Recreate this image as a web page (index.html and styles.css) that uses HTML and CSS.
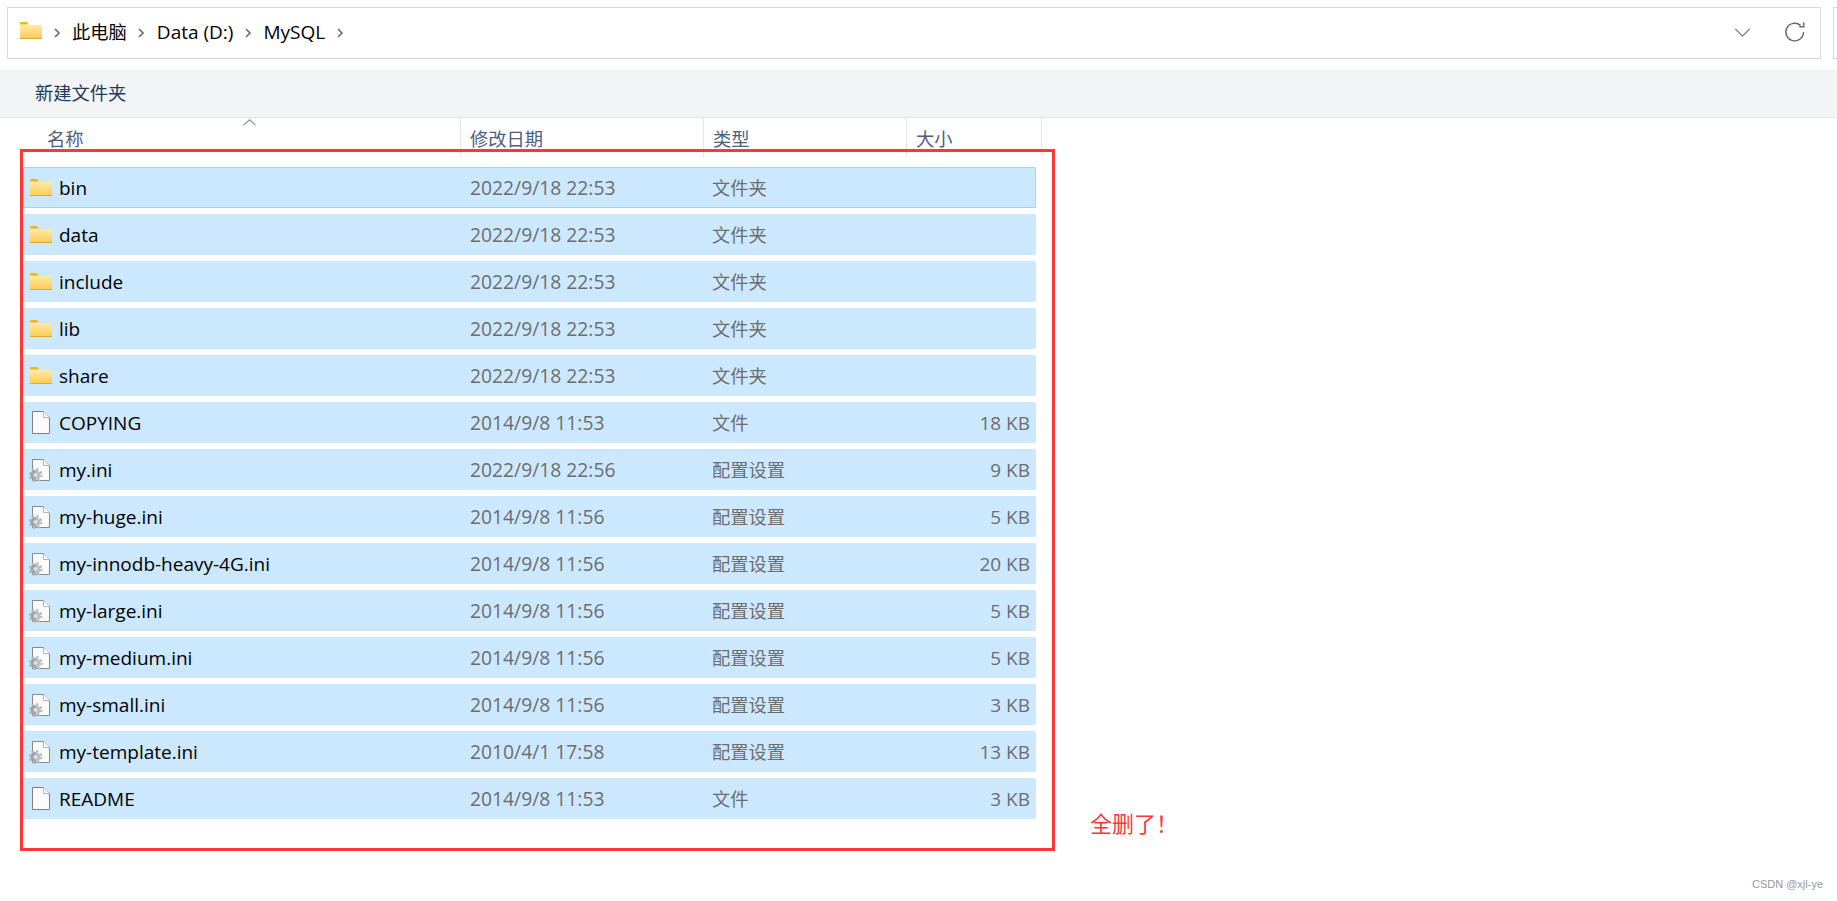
FILE: index.html
```html
<!DOCTYPE html>
<html lang="zh-CN">
  <head>
    <meta charset="UTF-8" />
    <title>MySQL</title>
    <link rel="stylesheet" href="styles.css">
  </head>
  <body>
    <svg class="defs" width="0" height="0">
      <defs>
        <linearGradient id="folderFill" x1="0" y1="0" x2="0" y2="1">
          <stop offset="0" stop-color="#ffeaa4" />
          <stop offset="1" stop-color="#fbca52" />
        </linearGradient>
        <symbol id="folder" viewBox="0 0 22 17">
          <path d="M0 1a1 1 0 0 1 1-1h6l2 2.500H0z" fill="#f6b31d" />
          <path d="M0 3h21.500a.5.5 0 0 1 .5.5V17H0z" fill="url(#folderFill)" />
          <path d="M0 16h22v1H0z" fill="#e3a92f" />
        </symbol>
        <symbol id="doc" viewBox="0 0 18 23">
          <path d="M.5.500h11l6 6v16H.500z" fill="#fbfbfb" stroke="#7f7f7f" />
          <path d="M11.500.500v6h6" fill="#fff" stroke="#b5b5b5" />
        </symbol>
        <symbol id="ini" viewBox="0 0 21 24">
          <path d="M3.500 1.500h11l6 6v15h-17z" fill="#fbfbfb" stroke="#8a8a8a" />
          <path d="M14.500 1.500v6h6" fill="#fff" stroke="#b5b5b5" />
          <circle cx="6.500" cy="17" r="5.900" fill="none" stroke="#b8bbbd" stroke-width="2.200" stroke-dasharray="2.300 2.330" />
          <circle cx="6.500" cy="17" r="5" fill="#bcbfc1" />
          <path d="M6.500 12a5 5 0 0 0 0 10z" fill="#a0a3a6" />
          <circle cx="6.500" cy="17" r="2" fill="#dde0e2" />
        </symbol>
      </defs>
    </svg>

    <div class="address-row">
      <div class="address-bar">
        <svg class="bar-folder"><use href="#folder" /></svg>
        <span class="crumb-sep"><svg viewBox="0 0 7 10"><path d="M1 1l4 4-4 4" /></svg></span>
        <span class="crumb cjk">此电脑</span>
        <span class="crumb-sep"><svg viewBox="0 0 7 10"><path d="M1 1l4 4-4 4" /></svg></span>
        <span class="crumb">Data (D:)</span>
        <span class="crumb-sep"><svg viewBox="0 0 7 10"><path d="M1 1l4 4-4 4" /></svg></span>
        <span class="crumb">MySQL</span>
        <span class="crumb-sep"><svg viewBox="0 0 7 10"><path d="M1 1l4 4-4 4" /></svg></span>
        <svg class="bar-down" viewBox="0 0 18 10"><path d="M1 1l8 8 8-8" /></svg>
        <svg class="bar-refresh" viewBox="0 0 22 22">
          <path d="M19.500 11a8.800 8.800 0 1 1-3-6.600" />
          <path d="M19.800 1.500v4.300h-4.500" />
        </svg>
      </div>
      <div class="search-box"></div>
    </div>

    <div class="toolbar cjk">新建文件夹</div>

    <div class="columns cjk">
      <div class="column column-name">名称
        <svg class="sort-caret" viewBox="0 0 12 6"><path d="M.5 5.500L6 .5l5.500 5" /></svg>
      </div>
      <div class="column column-date">修改日期</div>
      <div class="column column-type">类型</div>
      <div class="column column-size">大小</div>
    </div>

    <div class="file-list">
      <div class="file-row focused">
        <span class="file-name"><svg class="icon-folder"><use href="#folder" /></svg>bin</span>
        <span class="file-date">2022/9/18 22:53</span><span class="file-type cjk">文件夹</span><span class="file-size"></span>
      </div>
      <div class="file-row">
        <span class="file-name"><svg class="icon-folder"><use href="#folder" /></svg>data</span>
        <span class="file-date">2022/9/18 22:53</span><span class="file-type cjk">文件夹</span><span class="file-size"></span>
      </div>
      <div class="file-row">
        <span class="file-name"><svg class="icon-folder"><use href="#folder" /></svg>include</span>
        <span class="file-date">2022/9/18 22:53</span><span class="file-type cjk">文件夹</span><span class="file-size"></span>
      </div>
      <div class="file-row">
        <span class="file-name"><svg class="icon-folder"><use href="#folder" /></svg>lib</span>
        <span class="file-date">2022/9/18 22:53</span><span class="file-type cjk">文件夹</span><span class="file-size"></span>
      </div>
      <div class="file-row">
        <span class="file-name"><svg class="icon-folder"><use href="#folder" /></svg>share</span>
        <span class="file-date">2022/9/18 22:53</span><span class="file-type cjk">文件夹</span><span class="file-size"></span>
      </div>
      <div class="file-row">
        <span class="file-name"><svg class="icon-doc"><use href="#doc" /></svg>COPYING</span>
        <span class="file-date">2014/9/8 11:53</span><span class="file-type cjk">文件</span><span class="file-size">18 KB</span>
      </div>
      <div class="file-row">
        <span class="file-name"><svg class="icon-ini"><use href="#ini" /></svg>my.ini</span>
        <span class="file-date">2022/9/18 22:56</span><span class="file-type cjk">配置设置</span><span class="file-size">9 KB</span>
      </div>
      <div class="file-row">
        <span class="file-name"><svg class="icon-ini"><use href="#ini" /></svg>my-huge.ini</span>
        <span class="file-date">2014/9/8 11:56</span><span class="file-type cjk">配置设置</span><span class="file-size">5 KB</span>
      </div>
      <div class="file-row">
        <span class="file-name"><svg class="icon-ini"><use href="#ini" /></svg>my-innodb-heavy-4G.ini</span>
        <span class="file-date">2014/9/8 11:56</span><span class="file-type cjk">配置设置</span><span class="file-size">20 KB</span>
      </div>
      <div class="file-row">
        <span class="file-name"><svg class="icon-ini"><use href="#ini" /></svg>my-large.ini</span>
        <span class="file-date">2014/9/8 11:56</span><span class="file-type cjk">配置设置</span><span class="file-size">5 KB</span>
      </div>
      <div class="file-row">
        <span class="file-name"><svg class="icon-ini"><use href="#ini" /></svg>my-medium.ini</span>
        <span class="file-date">2014/9/8 11:56</span><span class="file-type cjk">配置设置</span><span class="file-size">5 KB</span>
      </div>
      <div class="file-row">
        <span class="file-name"><svg class="icon-ini"><use href="#ini" /></svg>my-small.ini</span>
        <span class="file-date">2014/9/8 11:56</span><span class="file-type cjk">配置设置</span><span class="file-size">3 KB</span>
      </div>
      <div class="file-row">
        <span class="file-name"><svg class="icon-ini"><use href="#ini" /></svg>my-template.ini</span>
        <span class="file-date">2010/4/1 17:58</span><span class="file-type cjk">配置设置</span><span class="file-size">13 KB</span>
      </div>
      <div class="file-row">
        <span class="file-name"><svg class="icon-doc"><use href="#doc" /></svg>README</span>
        <span class="file-date">2014/9/8 11:53</span><span class="file-type cjk">文件</span><span class="file-size">3 KB</span>
      </div>
    </div>

    <!-- annotation drawn over the screenshot -->
    <div class="mark-box"></div>
    <div class="mark-label">全删了！</div>
    <div class="watermark">CSDN @xjl-ye</div>
  </body>
</html>
```

FILE: styles.css
```css
:root {
  --selected: #cce8ff;
  --selected-edge: #99d1ff;
  --line: #e5e5e5;
  --muted: #6d6d6d;
  --header-text: #4c607a;
  --mark: #ff3636;
}

* {
  box-sizing: border-box;
}

html,
body {
  height: 100%;
}

body {
  margin: 0;
  overflow: hidden;
  position: relative;
  background: #ffffff;
  color: #000000;
  font-family: "Open Sans", "Noto Sans CJK SC", sans-serif;
  font-size: 19px;
}

/* the Chinese labels run a little smaller than the latin text */
.cjk {
  font-size: 18.300px;
}

.defs {
  display: block;
  height: 0;
}

/* address bar */
.address-row {
  display: flex;
  gap: 12px;
  margin-top: 7px;
  padding-left: 7px;
  height: 52px;
}

.address-bar {
  width: 1814px;
  flex-shrink: 0;
  display: flex;
  align-items: center;
  border: 1px solid #d9d9d9;
  padding-left: 12px;
  padding-bottom: 2px;
}

.search-box {
  flex: 1;
  border: 1px solid #d9d9d9;
  border-right: none;
}

.bar-folder {
  width: 22px;
  height: 17px;
  margin-top: -3px;
}

.crumb-sep {
  width: 30px;
  display: flex;
  justify-content: center;
  padding-top: 2px;
}

.crumb-sep svg {
  width: 7px;
  height: 10px;
  fill: none;
  stroke: #6b6b6b;
  stroke-width: 1.6;
}

.crumb {
  line-height: 1;
}

.bar-down {
  width: 17px;
  height: 9px;
  margin-left: auto;
  fill: none;
  stroke: #666666;
  stroke-width: 1.2;
}

.bar-refresh {
  width: 22px;
  height: 22px;
  margin-left: 33px;
  margin-right: 14px;
  fill: none;
  stroke: #666666;
  stroke-width: 1.4;
}

/* toolbar */
.toolbar {
  margin-top: 11px;
  height: 48px;
  padding-left: 35px;
  padding-bottom: 3px;
  display: flex;
  align-items: center;
  background: #f3f4f6;
  border-bottom: 1px solid var(--line);
  color: #1f3a5a;
}

/* column headers */
.columns {
  display: grid;
  grid-template-columns: 461px 243px 203px 135px;
  height: 39px;
}

.column {
  position: relative;
  border-right: 1px solid var(--line);
  padding-left: 9px;
  padding-top: 7px;
  color: var(--header-text);
  line-height: 28px;
}

.column-name {
  padding-left: 47px;
}

.sort-caret {
  position: absolute;
  left: 243px;
  top: 1px;
  width: 13px;
  height: 7px;
  fill: none;
  stroke: #8a8a8a;
}

/* file rows */
.file-list {
  display: flex;
  flex-direction: column;
  gap: 6px;
  margin-top: 10px;
  margin-left: 23px;
  width: 1013px;
}

.file-row {
  display: grid;
  grid-template-columns: 438px 242px 203px 130px;
  align-items: center;
  height: 41px;
  background: var(--selected);
  border-radius: 2px;
}

.file-row.focused {
  box-shadow: inset 0 0 0 1px var(--selected-edge);
}

.file-name {
  display: flex;
  align-items: center;
  padding-left: 7px;
}

.file-name svg {
  flex-shrink: 0;
}

.icon-folder {
  width: 22px;
  height: 17px;
  margin-right: 7px;
}

.icon-doc {
  width: 18px;
  height: 23px;
  margin-left: 2px;
  margin-right: 9px;
}

.icon-ini {
  width: 21px;
  height: 24px;
  margin-left: -1px;
  margin-right: 9px;
}

.file-date,
.file-type,
.file-size {
  color: var(--muted);
}

.file-date {
  padding-left: 9px;
  font-size: 19.300px;
}

.file-type {
  padding-left: 9px;
  padding-bottom: 1px;
}

.file-size {
  text-align: right;
  padding-right: 6px;
}

/* annotation */
.mark-box {
  position: absolute;
  left: 20px;
  top: 149px;
  width: 1035px;
  height: 702px;
  border: 3px solid var(--mark);
}

.mark-label {
  position: absolute;
  left: 1090px;
  top: 806px;
  color: var(--mark);
  font-family: "Noto Sans CJK SC", sans-serif;
  font-size: 22px;
  line-height: 32px;
}

.watermark {
  position: absolute;
  right: 14px;
  top: 878px;
  color: #999999;
  font-family: "Liberation Sans", sans-serif;
  font-size: 11px;
}
```
